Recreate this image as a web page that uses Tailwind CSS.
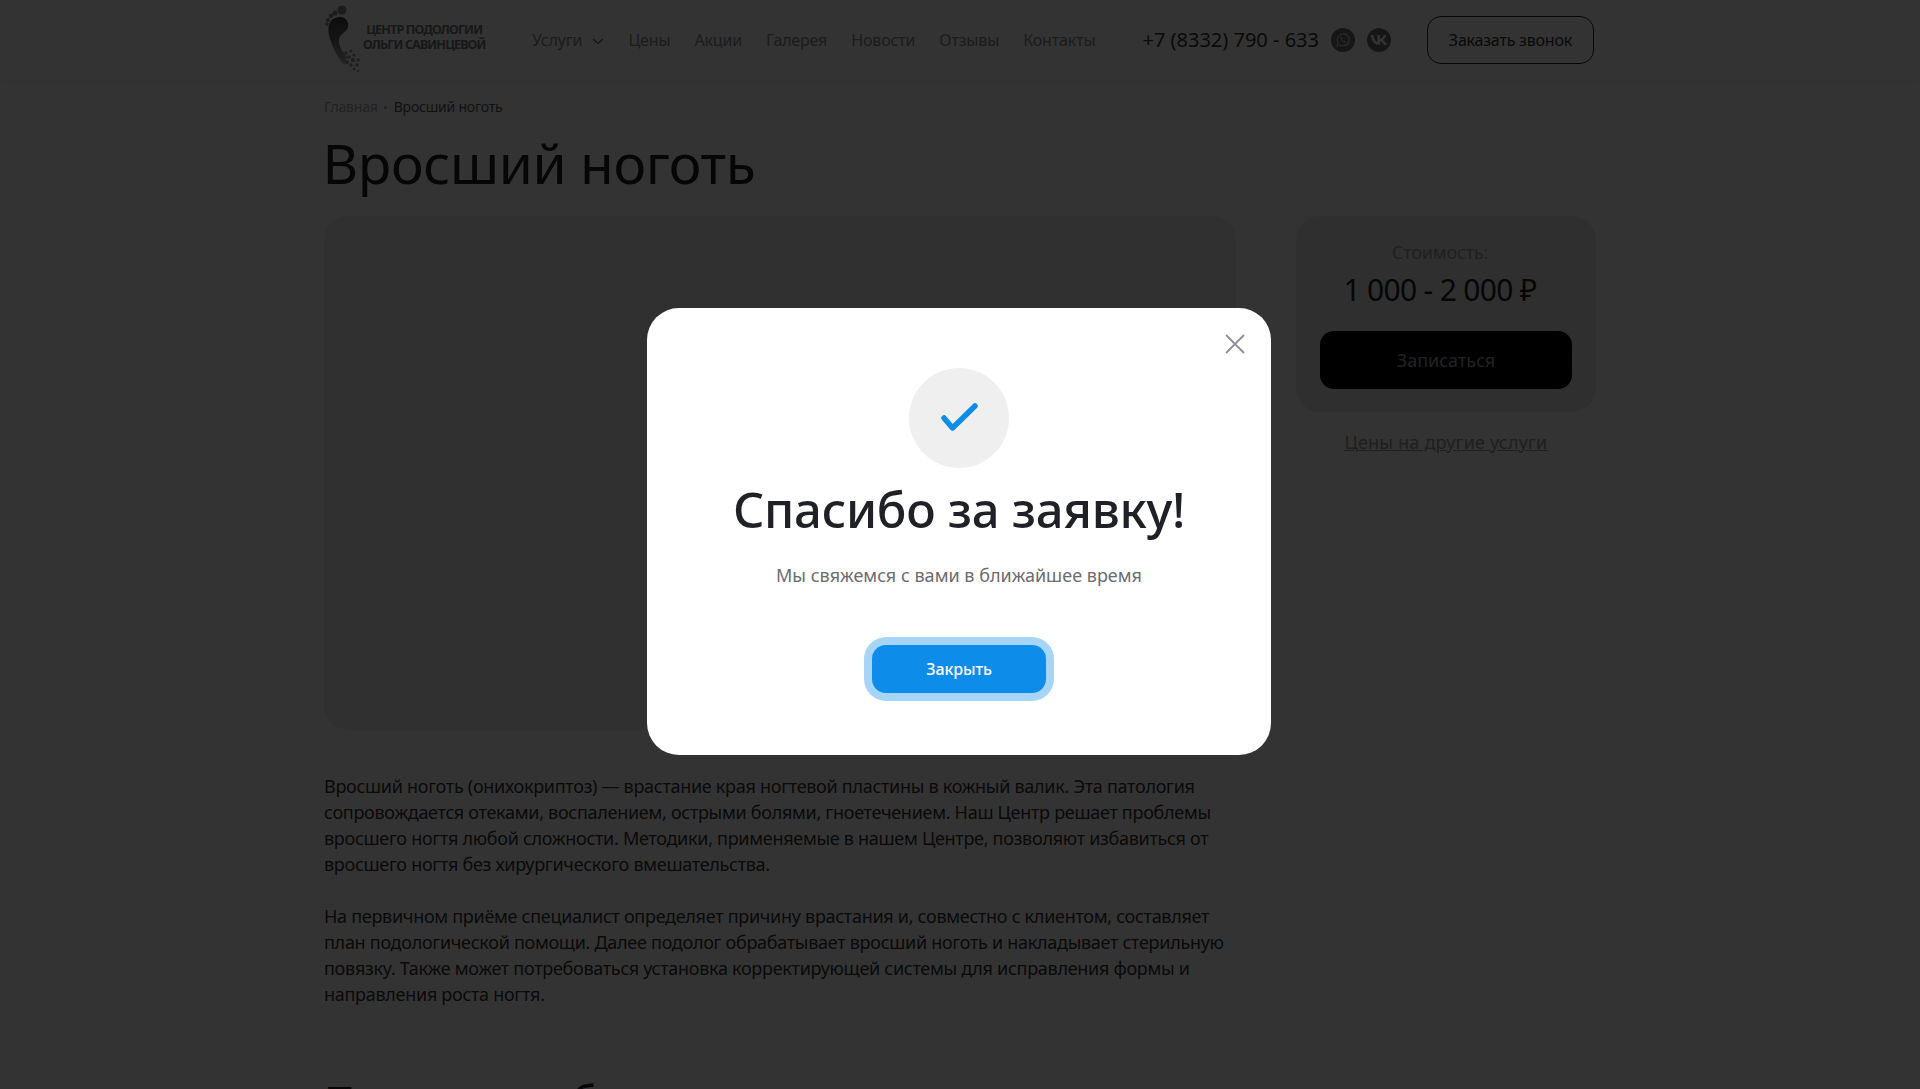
<!doctype html>
<html lang="ru">
  <head>
    <meta charset="UTF-8" />
    <title>Вросший ноготь</title>
    <script src="https://cdn.jsdelivr.net/npm/@tailwindcss/browser@4"></script>
  </head>
  <body class="relative h-[1089px] overflow-hidden bg-white font-['Noto_Sans',sans-serif] text-[#1f2126]">
    <header class="h-[80px] shadow-[0_2px_12px_rgba(0,0,0,0.05)]">
      <div class="mx-auto flex h-full w-[1272px] items-center">
        <a class="flex w-[188px] shrink-0 items-center">
          <svg class="h-[80px] w-[39px] shrink-0 overflow-visible" viewBox="4 0 39 80">
            <defs>
              <linearGradient id="foot" x1="0" y1="0" x2="0" y2="1">
                <stop offset="0" stop-color="#444" />
                <stop offset="0.45" stop-color="#666" />
                <stop offset="1" stop-color="#b5b5b5" />
              </linearGradient>
            </defs>
            <g fill="#8a8a8a">
              <circle cx="22" cy="10" r="4.500" />
              <circle cx="15" cy="13" r="2.600" />
              <circle cx="11" cy="16" r="2.200" />
              <circle cx="8" cy="20" r="2" />
              <circle cx="7" cy="24" r="1.800" />
            </g>
            <path fill="url(#foot)" d="M20 17C26 17 29 22 28 27C27 32 20 34 19 39C18 46 23 52 27 57L24 65C18 58 14 50 11 42C8 33 7 26 11 21C13 18 17 17 20 17Z" />
            <g fill="#999">
              <circle cx="26" cy="53" r="1.800" /><circle cx="31" cy="51" r="1.600" /><circle cx="29" cy="57" r="2" />
              <circle cx="34" cy="55" r="1.600" /><circle cx="27" cy="62" r="2" /><circle cx="33" cy="60" r="2.200" />
              <circle cx="38" cy="60" r="1.700" /><circle cx="31" cy="65" r="1.800" /><circle cx="37" cy="65" r="1.800" />
              <circle cx="34" cy="69" r="1.600" /><circle cx="38" cy="71" r="1.200" />
            </g>
          </svg>
          <span class="mb-[6px] text-center text-[12.5px] leading-[15px] font-bold tracking-[-0.85px] whitespace-nowrap text-[#777]">ЦЕНТР ПОДОЛОГИИ<br />ОЛЬГИ САВИНЦЕВОЙ</span>
        </a>
        <nav class="ml-[20px] flex shrink-0 items-center gap-[24px] text-[16px] tracking-[-0.15px] text-[#8c8c8c]">
          <a class="flex items-center gap-[10px]">Услуги
            <svg class="mt-[2px] h-[7px] w-[12px]" viewBox="0 0 12 7" fill="none" stroke="#777" stroke-width="1.500"><path d="M1 1l5 4.500L11 1" /></svg>
          </a>
          <a>Цены</a><a>Акции</a><a>Галерея</a><a>Новости</a><a>Отзывы</a><a>Контакты</a>
        </nav>
        <a class="ml-[47px] shrink-0 text-[20px] tracking-[0px] whitespace-nowrap text-[#333]">+7 (8332) 790 - 633</a>
        <div class="ml-[12px] flex shrink-0 gap-[12px]">
          <span class="flex size-[24px] items-center justify-center rounded-full bg-[#707070]">
            <svg class="size-[16px]" viewBox="0 0 16 16" fill="none" stroke="#c8c8c8" stroke-width="1.300"><path d="M2 14l1-3.400A6 6 0 1 1 5.400 13L2 14Z" /><path d="M6 5c-.6.4-.7 1-.4 1.900.6 1.500 2 2.900 3.500 3.400 1 .3 1.500 0 1.900-.6l-1.400-1-.7.500c-.8-.4-1.400-1-1.800-1.800l.5-.7L6.600 5H6Z" fill="#c8c8c8" stroke="none" /></svg>
          </span>
          <span class="flex size-[24px] items-center justify-center rounded-full bg-[#707070]">
            <svg class="h-[10px] w-[16px]" viewBox="0 0 16 10" fill="#fff"><path d="M8.700 10C3.300 10 .2 6.300 0 0h2.700c.1 4.600 2.100 6.500 3.700 6.900V0h2.600v4c1.500-.2 3.200-2 3.700-4h2.500c-.4 2.500-2.200 4.300-3.500 5 1.300.6 3.300 2.200 4.100 5h-2.800C12.400 8.100 10.900 6.700 9 6.500V10h-.3Z" /></svg>
          </span>
        </div>
        <a class="ml-[36px] flex h-[48px] w-[167px] shrink-0 items-center justify-center rounded-[14px] border border-[#222] text-[16px] tracking-[-0.2px] text-[#333]">Заказать звонок</a>
      </div>
    </header>

    <main class="mx-auto w-[1272px]">
      <div class="mt-[18px] flex items-center text-[14px] leading-[18px] tracking-[-0.2px]">
        <span class="text-[#aaa]">Главная</span>
        <span class="mx-[6.5px] size-[3px] rounded-full bg-[#aaa]"></span>
        <span class="text-[#555]">Вросший ноготь</span>
      </div>
      <h1 class="mt-[12px] -ml-[1.5px] text-[55px] leading-[70px] font-normal tracking-[-0.4px] text-[#222]">Вросший ноготь</h1>
      <div class="mt-[18px] flex items-start gap-[60px]">
        <div class="w-[912px] shrink-0">
          <div class="h-[514px] rounded-[24px] bg-[#f0f0f0]"></div>
          <div class="mt-[43px] text-[18px] leading-[26px] tracking-[-0.29px] text-[#333]">
            <p>Вросший ноготь (онихокриптоз) — врастание края ногтевой пластины в кожный валик. Эта патология сопровождается отеками, воспалением, острыми болями, гноетечением. Наш Центр решает проблемы вросшего ногтя любой сложности. Методики, применяемые в нашем Центре, позволяют избавиться от вросшего ногтя без хирургического вмешательства.</p>
            <p class="mt-[26px]">На первичном приёме специалист определяет причину врастания и, совместно с клиентом, составляет план подологической помощи. Далее подолог обрабатывает вросший ноготь и накладывает стерильную повязку. Также может потребоваться установка корректирующей системы для исправления формы и направления роста ногтя.</p>
          </div>
          <h2 class="mt-[65px] text-[43px] leading-[60px] font-normal text-[#222]">Почему необходимо лечение</h2>
        </div>
        <aside class="w-[300px] shrink-0">
          <div class="flex h-[196px] flex-col items-center rounded-[24px] bg-[#ececec] px-[24px] pt-[24px]">
            <div class="mr-[12px] text-[18px] leading-[24px] tracking-[-0.15px] text-[#a0a0a0]">Стоимость:</div>
            <div class="mt-[7px] mr-[12px] text-[30px] leading-[38px] tracking-[-0.7px] text-[#222]">1 000 - 2 000 ₽</div>
            <button class="mt-[22px] h-[58px] w-[252px] rounded-[14px] bg-black text-[18px] text-[#aaa]">Записаться</button>
          </div>
          <a class="mt-[18px] block text-center text-[18px] leading-[24px] tracking-[0.2px] text-[#999] underline">Цены на другие услуги</a>
        </aside>
      </div>
    </main>

    <div class="absolute inset-0 flex items-start justify-center bg-black/80 pt-[308px] pr-[2px]">
      <div class="relative flex h-[447px] w-[624px] flex-col items-center rounded-[32px] bg-white pt-[60px]">
        <button class="absolute top-[26px] right-[26px]">
          <svg class="size-[20px]" viewBox="0 0 20 20" fill="none" stroke="#8e8e99" stroke-width="1.800"><path d="M1 1l18 18M19 1L1 19" /></svg>
        </button>
        <div class="flex size-[100px] items-center justify-center rounded-full bg-[#efefef]">
          <svg class="size-[40px]" viewBox="0 0 40 40" fill="none" stroke="#0d8ce9" stroke-width="5.500" stroke-linecap="round" stroke-linejoin="round"><path d="M5 20l8.500 10L36 8" /></svg>
        </div>
        <h2 class="mt-[9px] text-[49px] leading-[64px] font-medium tracking-[-0.3px] text-[#1f2126]">Спасибо за заявку!</h2>
        <p class="mt-[22px] text-[18px] leading-[24px] text-[#6b6b70]">Мы свяжемся с вами в ближайшее время</p>
        <button class="mt-[58px] h-[48px] w-[174px] rounded-[14px] bg-[#0d8ce9] text-[16px] font-medium tracking-[-0.1px] text-white shadow-[0_0_0_8px_#a6d5f8]">Закрыть</button>
      </div>
    </div>
  </body>
</html>
